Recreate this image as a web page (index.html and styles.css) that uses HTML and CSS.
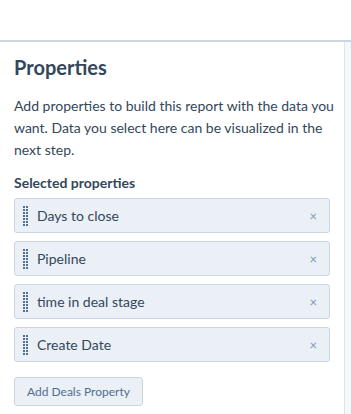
FILE: index.html
```html
<!DOCTYPE html>
<html lang="en">
  <head>
    <meta charset="UTF-8" />
    <title>Properties</title>
    <link rel="stylesheet" href="styles.css">
  </head>
  <body>
    <div class="topbar"></div>
    <div class="layout">
      <div class="panel">
        <h2 class="panel-title">Properties</h2>
        <p class="panel-desc">
          Add properties to build this report with the data you want. Data you
          select here can be visualized in the next step.
        </p>
        <h3 class="section-title">Selected properties</h3>
        <ul class="prop-list">
          <li class="prop">
            <svg class="handle" width="5" height="20" viewBox="0 0 5 20">
              <g fill="#516f90">
                <rect x="0" y="0" width="2" height="2" /><rect x="3" y="0" width="2" height="2" />
                <rect x="0" y="3" width="2" height="2" /><rect x="3" y="3" width="2" height="2" />
                <rect x="0" y="6" width="2" height="2" /><rect x="3" y="6" width="2" height="2" />
                <rect x="0" y="9" width="2" height="2" /><rect x="3" y="9" width="2" height="2" />
                <rect x="0" y="12" width="2" height="2" /><rect x="3" y="12" width="2" height="2" />
                <rect x="0" y="15" width="2" height="2" /><rect x="3" y="15" width="2" height="2" />
                <rect x="0" y="18" width="2" height="2" /><rect x="3" y="18" width="2" height="2" />
              </g>
            </svg>
            <span class="prop-name">Days to close</span>
            <span class="remove">&times;</span>
          </li>
          <li class="prop">
            <svg class="handle" width="5" height="20" viewBox="0 0 5 20">
              <g fill="#516f90">
                <rect x="0" y="0" width="2" height="2" /><rect x="3" y="0" width="2" height="2" />
                <rect x="0" y="3" width="2" height="2" /><rect x="3" y="3" width="2" height="2" />
                <rect x="0" y="6" width="2" height="2" /><rect x="3" y="6" width="2" height="2" />
                <rect x="0" y="9" width="2" height="2" /><rect x="3" y="9" width="2" height="2" />
                <rect x="0" y="12" width="2" height="2" /><rect x="3" y="12" width="2" height="2" />
                <rect x="0" y="15" width="2" height="2" /><rect x="3" y="15" width="2" height="2" />
                <rect x="0" y="18" width="2" height="2" /><rect x="3" y="18" width="2" height="2" />
              </g>
            </svg>
            <span class="prop-name">Pipeline</span>
            <span class="remove">&times;</span>
          </li>
          <li class="prop">
            <svg class="handle" width="5" height="20" viewBox="0 0 5 20">
              <g fill="#516f90">
                <rect x="0" y="0" width="2" height="2" /><rect x="3" y="0" width="2" height="2" />
                <rect x="0" y="3" width="2" height="2" /><rect x="3" y="3" width="2" height="2" />
                <rect x="0" y="6" width="2" height="2" /><rect x="3" y="6" width="2" height="2" />
                <rect x="0" y="9" width="2" height="2" /><rect x="3" y="9" width="2" height="2" />
                <rect x="0" y="12" width="2" height="2" /><rect x="3" y="12" width="2" height="2" />
                <rect x="0" y="15" width="2" height="2" /><rect x="3" y="15" width="2" height="2" />
                <rect x="0" y="18" width="2" height="2" /><rect x="3" y="18" width="2" height="2" />
              </g>
            </svg>
            <span class="prop-name">time in deal stage</span>
            <span class="remove">&times;</span>
          </li>
          <li class="prop">
            <svg class="handle" width="5" height="20" viewBox="0 0 5 20">
              <g fill="#516f90">
                <rect x="0" y="0" width="2" height="2" /><rect x="3" y="0" width="2" height="2" />
                <rect x="0" y="3" width="2" height="2" /><rect x="3" y="3" width="2" height="2" />
                <rect x="0" y="6" width="2" height="2" /><rect x="3" y="6" width="2" height="2" />
                <rect x="0" y="9" width="2" height="2" /><rect x="3" y="9" width="2" height="2" />
                <rect x="0" y="12" width="2" height="2" /><rect x="3" y="12" width="2" height="2" />
                <rect x="0" y="15" width="2" height="2" /><rect x="3" y="15" width="2" height="2" />
                <rect x="0" y="18" width="2" height="2" /><rect x="3" y="18" width="2" height="2" />
              </g>
            </svg>
            <span class="prop-name">Create Date</span>
            <span class="remove">&times;</span>
          </li>
        </ul>
        <button class="add-btn">Add Deals Property</button>
      </div>
      <div class="side"></div>
    </div>
  </body>
</html>
```

FILE: styles.css
```css
body {
  margin: 0;
  font-family: "Lato", "Open Sans", sans-serif;
  color: #33475b;
  background: #fff;
}
.topbar {
  height: 40px;
  border-bottom: 2px solid #cbd6e2;
}
.layout {
  display: flex;
  height: 372px;
}
.panel {
  width: 344px;
  padding: 0 6px 0 14px;
  box-sizing: border-box;
}
.side {
  flex: 1;
  border-left: 1px solid #dfe3eb;
  background: #f5f8fa;
}
.panel-title {
  margin: 13px 0 0;
  font-size: 20px;
  font-weight: 700;
  line-height: 24px;
}
.panel-desc {
  margin: 16px 0 0;
  font-size: 14px;
  line-height: 22px;
}
.section-title {
  margin: 13px 0 0;
  font-size: 14px;
  font-weight: 700;
  line-height: 18px;
}
.prop-list {
  list-style: none;
  margin: 6px 0 0;
  padding: 0;
  width: 316px;
}
.prop {
  display: flex;
  align-items: center;
  height: 35px;
  box-sizing: border-box;
  margin-bottom: 8px;
  padding: 0 12px 0 8px;
  background: #eaf0f6;
  border: 1px solid #cbd6e2;
  border-radius: 3px;
  font-size: 14px;
}
.handle {
  margin-right: 9px;
}
.prop-name {
  flex: 1;
}
.remove {
  color: #7c98b6;
  font-size: 13px;
}
.add-btn {
  margin-top: 7px;
  height: 29px;
  padding: 0 12px;
  background: #eaf0f6;
  border: 1px solid #cbd6e2;
  border-radius: 3px;
  color: #506e91;
  font-family: inherit;
  font-size: 12px;
}
```
